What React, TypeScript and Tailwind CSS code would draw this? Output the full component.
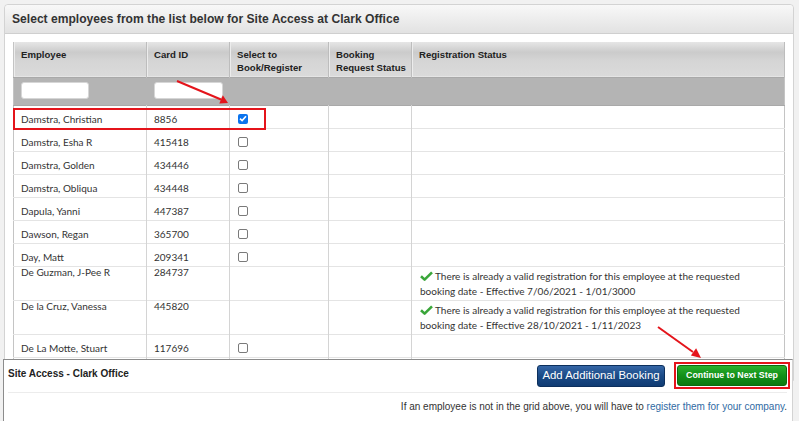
import React from 'react';

type Employee = {
  name: string;
  card: string;
  selectable: boolean;
  checked?: boolean;
  status?: string;
};

const employees: Employee[] = [
  { name: 'Damstra, Christian', card: '8856', selectable: true, checked: true },
  { name: 'Damstra, Esha R', card: '415418', selectable: true },
  { name: 'Damstra, Golden', card: '434446', selectable: true },
  { name: 'Damstra, Obliqua', card: '434448', selectable: true },
  { name: 'Dapula, Yanni', card: '447387', selectable: true },
  { name: 'Dawson, Regan', card: '365700', selectable: true },
  { name: 'Day, Matt', card: '209341', selectable: true },
  { name: 'De Guzman, J-Pee R', card: '284737', selectable: false, status: '7/06/2021 - 1/01/3000' },
  { name: 'De la Cruz, Vanessa', card: '445820', selectable: false, status: '28/10/2021 - 1/11/2023' },
  { name: 'De La Motte, Stuart', card: '117696', selectable: true },
];

const body = "font-['Lato',sans-serif] text-[10px] text-[#333]";
const bold = "font-['Liberation_Sans',Arial,sans-serif] font-bold";

const CheckBox = ({ checked }: { checked?: boolean }) =>
  checked ? (
    <span className="flex h-[10px] w-[10px] items-center justify-center rounded-[2px] bg-[#0b74ee]">
      <svg width="8" height="7" viewBox="0 0 8 7">
        <path d="M1 3.6 L3.1 5.6 L7 1.2" fill="none" stroke="#fff" strokeWidth="1.6" />
      </svg>
    </span>
  ) : (
    <span className="block h-[10px] w-[10px] rounded-[2px] border border-[#7a7a7a] bg-white" />
  );

const Tick = () => (
  <svg width="13" height="10" viewBox="0 0 13 10" className="mr-[2px] inline-block align-[-1px]">
    <path d="M1 5.2 L4.6 8.6 L12 1.4" fill="none" stroke="#3aa63a" strokeWidth="2.6" strokeLinejoin="round" />
  </svg>
);

export default function App() {
  return (
    <div className="relative h-[421px] w-[799px] overflow-hidden bg-[#f1f1f1]">
      {/* main panel */}
      <div className="ml-[4px] mt-[4px] w-[790px] rounded-t-[4px] border border-[#d3d3d3] bg-white">
        <div className="flex h-[29px] items-center rounded-t-[4px] border-b border-[#cfcfcf] bg-[linear-gradient(to_bottom,#f8f8f8,#e2e2e2)] pl-[7px]">
          <h1 className={`${bold} text-[12.1px] text-[#333]`}>
            Select employees from the list below for Site Access at Clark Office
          </h1>
        </div>

        <div className="px-[8px] pt-[8px]">
          <table className="w-full table-fixed border-collapse border-x border-[#c4c4c4]">
            <colgroup>
              <col className="w-[133px]" />
              <col className="w-[83px]" />
              <col className="w-[99px]" />
              <col className="w-[83px]" />
              <col />
            </colgroup>
            <thead>
              <tr className="h-[35px] border-b border-[#a9a9a9] bg-[linear-gradient(to_bottom,#e6e6e6_0%,#cbcbcb_30%,#d5d5d5_55%,#dadada_100%)]">
                {['Employee', 'Card ID', 'Select to\nBook/Register', 'Booking\nRequest Status', 'Registration Status'].map((h) => (
                  <th
                    key={h}
                    className={`${bold} whitespace-pre-line border-r border-[#bdbdbd] pl-[7px] pt-[6px] text-left align-top text-[9.6px] leading-[13px] text-[#222] shadow-[inset_1px_0_0_#ececec]`}
                  >
                    {h}
                  </th>
                ))}
              </tr>
              <tr className="h-[28px] border-b border-[#a9a9a9] bg-[#b4b4b4]">
                <td className="pl-[7px] pt-[4px] align-top">
                  <span className="block h-[17px] w-[68px] rounded-[3px] border border-[#d6d6d6] bg-white" />
                </td>
                <td className="pl-[7px] pt-[4px] align-top">
                  <span className="block h-[17px] w-[69px] rounded-[3px] border border-[#d6d6d6] bg-white" />
                </td>
                <td />
                <td />
                <td />
              </tr>
            </thead>
            <tbody className={body}>
              {employees.map((e) => {
                const tall = !!e.status;
                const txt = tall ? 'pt-0 leading-[11px]' : 'pt-[7px] leading-[13px]';
                return (
                  <tr key={e.name} className={`${tall ? 'h-[34px]' : 'h-[23px]'} border-b border-[#e4e4e4]`}>
                    <td className={`border-r border-[#d4d4d4] pl-[7px] align-top ${txt}`}>{e.name}</td>
                    <td className={`border-r border-[#d4d4d4] pl-[7px] align-top ${txt}`}>{e.card}</td>
                    <td className="border-r border-[#d4d4d4] pl-[8px] pt-[8px] align-top">
                      {e.selectable && <CheckBox checked={e.checked} />}
                    </td>
                    <td className="border-r border-[#d4d4d4]" />
                    <td className="pl-[8px] pt-[2px] align-top leading-[15px]">
                      {e.status && (
                        <>
                          <Tick />
                          There is already a valid registration for this employee at the requested
                          <br />
                          booking date - Effective {e.status}
                        </>
                      )}
                    </td>
                  </tr>
                );
              })}
              <tr className="h-[23px]">
                <td className="border-r border-[#d4d4d4]" />
                <td className="border-r border-[#d4d4d4]" />
                <td className="border-r border-[#d4d4d4]" />
                <td className="border-r border-[#d4d4d4]" />
                <td />
              </tr>
            </tbody>
          </table>
        </div>
      </div>

      {/* sticky footer bar */}
      <div className="absolute bottom-0 left-[3px] top-[359px] z-10 w-[790px] border-l border-t border-r border-[#8c8c8c] border-r-[#d3d3d3] bg-white">
        <div className="flex items-start justify-between pl-[4px] pr-[2px] pt-[2px]">
          <span className={`${bold} mt-[6px] text-[10px] leading-[12px] text-[#222]`}>Site Access - Clark Office</span>
          <div className="flex items-center gap-[9px]">
            <button className="h-[22px] w-[128px] rounded-[3px] border border-[#0c2f5c] bg-[linear-gradient(to_bottom,#3566a6,#1a4a86_50%,#0f3b73)] font-['Liberation_Sans',Arial,sans-serif] text-[11.4px] text-white">
              Add Additional Booking
            </button>
            <div className="border-2 border-[#e4141b] p-[1px]">
              <button className={`${bold} block h-[21px] w-[110px] rounded-[3px] border border-[#0d6a0d] bg-[linear-gradient(to_bottom,#2bb02b,#13901a_50%,#0b7a10)] text-[8.8px] text-white`}>
                Continue to Next Step
              </button>
            </div>
          </div>
        </div>
        <div className="ml-[4px] mr-[5px] mt-[3px] border-t border-[#ececec] pt-[8px] text-right font-['Liberation_Sans',Arial,sans-serif] text-[10px] leading-[12px] text-[#333]">
          If an employee is not in the grid above, you will have to{' '}
          <a className="text-[#2f6aa3]">register them for your company</a>.
        </div>
      </div>

      {/* red call-outs */}
      <svg className="pointer-events-none absolute inset-0 z-20" width="799" height="421" viewBox="0 0 799 421">
        <rect x="14" y="109" width="251" height="20" fill="none" stroke="#e4141b" strokeWidth="2" />
        <line x1="177" y1="81" x2="221" y2="99.5" stroke="#e4141b" strokeWidth="2" />
        <polygon points="228,103 219.3,103.6 222.8,95.3" fill="#e4141b" />
        <line x1="658" y1="327" x2="693" y2="352" stroke="#e4141b" strokeWidth="2" />
        <polygon points="701,358 690.9,355.6 696.1,348.2" fill="#e4141b" />
      </svg>
    </div>
  );
}
